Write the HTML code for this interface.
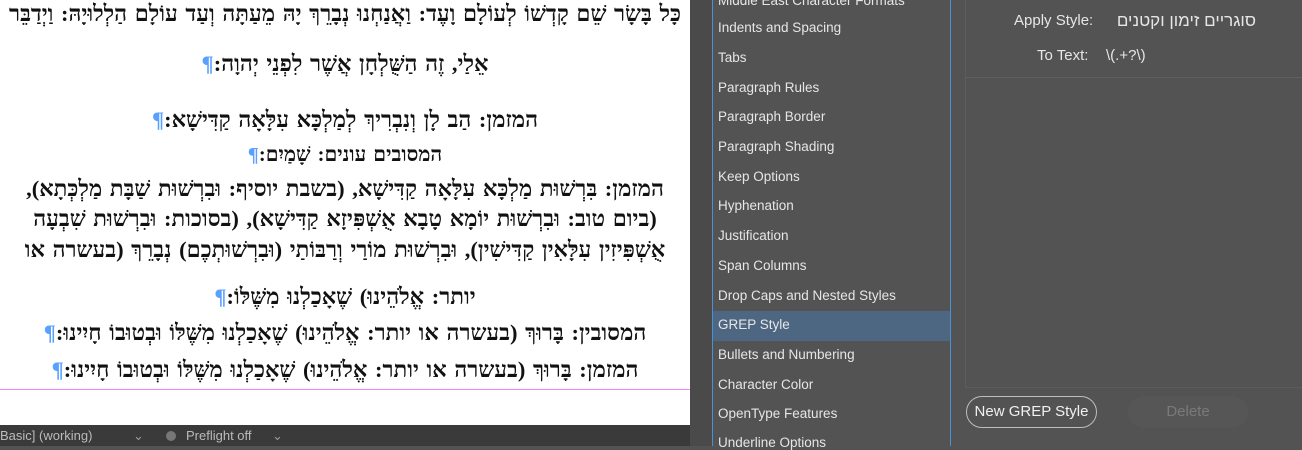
<!DOCTYPE html>
<html><head><meta charset="utf-8"><style>
*{margin:0;padding:0;box-sizing:border-box}
body{width:1302px;height:446px;overflow:hidden;background:#535353;position:relative;font-family:"Liberation Sans",sans-serif}
#doc{position:absolute;left:0;top:0;width:690px;height:425px;background:#fff;overflow:hidden}
.l{position:absolute;left:0;width:690px;text-align:center;white-space:nowrap;direction:rtl;font-family:"Liberation Serif","DejaVu Serif",serif;font-weight:bold;font-size:22.5px;color:#111;line-height:26px;word-spacing:2px}
.p{color:#5aa0ff}
#pink{position:absolute;left:0;top:389px;width:690px;height:1px;background:#ff80ff}
#status{position:absolute;left:0;top:425px;width:690px;height:21px;background:#3a3a3a;color:#bbb;font-size:13px;line-height:21px}
#gap{position:absolute;left:690px;top:0;width:22px;height:446px;background:#4a4a4a}
#list{position:absolute;left:712px;top:0;width:239px;height:446px;background:#535353;border-left:1px solid #4a8fd8;border-right:1px solid #4a8fd8}
.it{position:absolute;left:5px;font-size:13.5px;color:#e6e6e6;white-space:nowrap}
#sel{position:absolute;left:0;top:311px;width:237px;height:30px;background:#4d6682}
#box{position:absolute;left:965px;top:0;width:337px;height:388px;border-left:1px solid #5c5c5c;border-bottom:1px solid #5c5c5c}
#hl{position:absolute;left:965px;top:77px;width:337px;height:1px;background:#5f5f5f}
.r{position:absolute;font-size:15px;color:#e6e6e6;white-space:nowrap}
.c{display:inline-block}
#btn{position:absolute;left:966px;top:396px;width:131px;height:32px;border:1px solid #bdbdbd;border-radius:16px;color:#f0f0f0;font-size:15px;text-align:center;line-height:30px}
#del{position:absolute;left:1128px;top:396px;width:120px;height:32px;border-radius:16px;background:#565656;color:#7a7a7a;font-size:15px;text-align:center;line-height:32px}
</style></head><body>
<div id="doc">
<div class="l" style="top:1px;left:-60px;width:810px">כָּל בָּשָׂר שֵׁם קָדְשׁוֹ לְעוֹלָם וָעֶד: וַאֲנַחְנוּ נְבָרֵךְ יָהּ מֵעַתָּה וְעַד עוֹלָם הַלְלוּיָהּ: וַיְדַבֵּר</div>
<div class="l" style="top:51px">אֵלַי, זֶה הַשֻּׁלְחָן אֲשֶׁר לִפְנֵי יְהוָה:<span class="p">¶</span></div>
<div class="l" style="top:107px">המזמן: הַב לָן וְנִבְרִיךְ לְמַלְכָּא עִלָּאָה קַדִּישָׁא:<span class="p">¶</span></div>
<div class="l" style="top:142px;font-size:20.5px">המסובים עונים: שָׁמַיִם:<span class="p">¶</span></div>
<div class="l" style="top:176px">המזמן: בִּרְשׁוּת מַלְכָּא עִלָּאָה קַדִּישָׁא, (בשבת יוסיף: וּבִרְשׁוּת שַׁבָּת מַלְכְּתָא),</div>
<div class="l" style="top:206px">(ביום טוב: וּבִרְשׁוּת יוֹמָא טָבָא אֻשְׁפִּיזָא קַדִּישָׁא), (בסוכות: וּבִרְשׁוּת שִׁבְעָה</div>
<div class="l" style="top:237px">אֻשְׁפִּיזִין עִלָּאִין קַדִּישִׁין), וּבִרְשׁוּת מוֹרַי וְרַבּוֹתַי (וּבִרְשׁוּתְכֶם) נְבָרֵךְ (בעשרה או</div>
<div class="l" style="top:284px">יותר: אֱלֹהֵינוּ) שֶׁאָכַלְנוּ מִשֶּׁלּוֹ:<span class="p">¶</span></div>
<div class="l" style="top:320px">המסובין: בָּרוּךְ (בעשרה או יותר: אֱלֹהֵינוּ) שֶׁאָכַלְנוּ מִשֶּׁלּוֹ וּבְטוּבוֹ חָיִינוּ:<span class="p">¶</span></div>
<div class="l" style="top:357px">המזמן: בָּרוּךְ (בעשרה או יותר: אֱלֹהֵינוּ) שֶׁאָכַלְנוּ מִשֶּׁלּוֹ וּבְטוּבוֹ חָיִינוּ:<span class="p">¶</span></div>
<div id="pink"></div>
</div>
<div id="status"><span style="position:absolute;left:0">Basic] (working)</span><span style="position:absolute;left:133px;color:#999">⌄</span><span style="position:absolute;left:166px;top:6px;width:10px;height:10px;border-radius:5px;background:#777"></span><span style="position:absolute;left:186px">Preflight off</span><span style="position:absolute;left:272px;color:#999">⌄</span></div>
<div id="gap"></div>
<div id="list">
<div class="it" style="top:-7px">Middle East Character Formats</div>
<div class="it" style="top:20px">Indents and Spacing</div>
<div class="it" style="top:50px">Tabs</div>
<div class="it" style="top:80px">Paragraph Rules</div>
<div class="it" style="top:109px">Paragraph Border</div>
<div class="it" style="top:139px">Paragraph Shading</div>
<div class="it" style="top:169px">Keep Options</div>
<div class="it" style="top:198px">Hyphenation</div>
<div class="it" style="top:228px">Justification</div>
<div class="it" style="top:258px">Span Columns</div>
<div class="it" style="top:288px">Drop Caps and Nested Styles</div>
<div id="sel"></div>
<div class="it" style="top:317px">GREP Style</div>
<div class="it" style="top:347px">Bullets and Numbering</div>
<div class="it" style="top:377px">Character Color</div>
<div class="it" style="top:406px">OpenType Features</div>
<div class="it" style="top:435px">Underline Options</div>
</div>
<div id="box"></div>
<div id="hl"></div>
<div class="r" style="left:1014px;top:12px">Apply Style:</div>
<div class="r" style="left:1100px;top:11px;font-size:17px;direction:rtl;width:156px;text-align:right">סוגריים זימון וקטנים</div>
<div class="r" style="left:1037px;top:47px">To Text:</div>
<div class="r" style="left:1106px;top:47px"><span class="c">\</span><span class="c">(</span><span class="c">.</span><span class="c">+</span><span class="c">?</span><span class="c">\</span><span class="c">)</span></div>
<div id="btn">New GREP Style</div>
<div id="del">Delete</div>
</body></html>
